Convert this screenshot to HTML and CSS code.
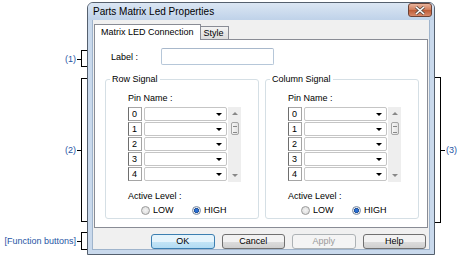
FILE: index.html
```html
<!DOCTYPE html>
<html lang="en">
<head>
	<meta charset="UTF-8">
	<title>Parts Matrix Led Properties</title>
	<link rel="stylesheet" href="styles.css">
</head>
<body>
	<section class="canvas">
		<div class="dialog">
			<div class="titlebar">
				<span class="title">Parts Matrix Led Properties</span>
				<span class="close">
					<svg width="12" height="9" viewBox="0 0 12 9"><path d="M2 1 L10 8 M10 1 L2 8" stroke="#5a4a44" stroke-width="3"/><path d="M2 1 L10 8 M10 1 L2 8" stroke="#fff" stroke-width="1.6"/></svg>
				</span>
			</div>
			<div class="client">
				<div class="tabs">
					<span class="tab active">Matrix LED Connection</span>
					<span class="tab">Style</span>
				</div>
				<div class="page">
					<div class="label-row">
						<span class="label-text">Label :</span>
						<span class="textbox"></span>
					</div>
					<div class="groups">
						<fieldset class="group">
							<legend>Row Signal</legend>
							<div class="caption">Pin Name :</div>
							<div class="pins">
								<ul class="rows">
									<li><span class="idx">0</span><span class="combo"><i class="arrow"></i></span></li>
									<li><span class="idx">1</span><span class="combo"><i class="arrow"></i></span></li>
									<li><span class="idx">2</span><span class="combo"><i class="arrow"></i></span></li>
									<li><span class="idx">3</span><span class="combo"><i class="arrow"></i></span></li>
									<li><span class="idx">4</span><span class="combo"><i class="arrow"></i></span></li>
								</ul>
								<div class="scroll"><i class="up"></i><i class="thumb"></i><i class="down"></i></div>
							</div>
							<div class="caption level">Active Level :</div>
							<div class="radios">
								<label class="radio"><i class="dot"></i>LOW</label>
								<label class="radio on"><i class="dot"></i>HIGH</label>
							</div>
						</fieldset>
						<fieldset class="group">
							<legend>Column Signal</legend>
							<div class="caption">Pin Name :</div>
							<div class="pins">
								<ul class="rows">
									<li><span class="idx">0</span><span class="combo"><i class="arrow"></i></span></li>
									<li><span class="idx">1</span><span class="combo"><i class="arrow"></i></span></li>
									<li><span class="idx">2</span><span class="combo"><i class="arrow"></i></span></li>
									<li><span class="idx">3</span><span class="combo"><i class="arrow"></i></span></li>
									<li><span class="idx">4</span><span class="combo"><i class="arrow"></i></span></li>
								</ul>
								<div class="scroll"><i class="up"></i><i class="thumb"></i><i class="down"></i></div>
							</div>
							<div class="caption level">Active Level :</div>
							<div class="radios">
								<label class="radio"><i class="dot"></i>LOW</label>
								<label class="radio on"><i class="dot"></i>HIGH</label>
							</div>
						</fieldset>
					</div>
				</div>
				<div class="buttons">
					<span class="btn default">OK</span>
					<span class="btn">Cancel</span>
					<span class="btn disabled">Apply</span>
					<span class="btn">Help</span>
				</div>
			</div>
		</div>

		<div class="note n1"><span>(1)</span></div>
		<div class="note n2"><span>(2)</span></div>
		<div class="note n3"><span>(3)</span></div>
		<div class="note n4"><span>[Function buttons]</span></div>
	</section>
</body>
</html>
```

FILE: styles.css
```css
*{margin: 0; padding: 0; box-sizing: border-box;}
li{list-style: none;}
body{background: #fff; font-family: "Liberation Sans", Arial, sans-serif; font-size: 9px; color: #000;}
.canvas{width: 474px; height: 259px; position: relative; overflow: hidden; padding: 2px 0 0 87px;}

/* window */
.dialog{width: 348px; height: 253px; border: 1px solid #55606e; border-radius: 6px 6px 0 0; background: #c9d9ec; padding: 0 4px 4px 4px; display: flex; flex-direction: column;}
.titlebar{height: 19px; display: flex; align-items: center; justify-content: space-between; margin: 0 -4px; padding: 0 2px 0 5px; background: linear-gradient(#dbe6f3, #bfd2e9); border-radius: 5px 5px 0 0;}
.title{font-size: 10px; color: #000;}
.close{width: 24px; height: 14px; margin-top: -3px; border: 1px solid #6b4236; border-radius: 3px; background: linear-gradient(#e9b49c, #cf7a57 50%, #bd5a35 51%, #d8896a); display: flex; align-items: center; justify-content: center;}
.client{flex: 1; background: #f0f0f0; padding: 3px 3px 0 1px; border: 1px solid #9fb4cc; border-top: none;}

/* tabs */
.tabs{display: flex; align-items: flex-end; height: 16px; position: relative; z-index: 1;}
.tab{height: 13px; padding: 0 4px 0 3px; border: 1px solid #898c95; border-bottom: none; background: linear-gradient(#f3f3f3, #dcdcdc); line-height: 12px; margin-left: -1px;}
.tab.active{height: 16px; margin-left: 0; padding: 0 6px 0 6px; background: #fff; line-height: 15px; margin-bottom: -1px;}
.page{height: 189px; background: #fff; border: 1px solid #898c95; padding: 8px 8px 0 10px; width: 334px;}

.label-row{display: flex; align-items: center; height: 17px; padding-left: 6px;}
.label-text{width: 50px;}
.textbox{width: 113px; height: 17px; border: 1px solid #b6c7d9; border-top-color: #a8b8cb; border-radius: 2px; background: #fff;}

.groups{display: flex; gap: 6px; margin-top: 9px;}
.group{width: 154px; border: 1px solid #d5dfe5; border-radius: 3px; padding: 9px 0 3px 22px;}
.group legend{margin-left: -18px; padding: 0 2px; line-height: 10px; font-size: 9px;}
.caption{line-height: 10px;}
.level{margin-top: 9px;}

.pins{display: flex; margin-top: 4px;}
.rows li{display: flex; gap: 2px; height: 15px;}
.idx{width: 14px; height: 14px; border: 1px solid #a5a5a5; border-left-color: #6e6e6e; line-height: 12px; padding-left: 3px; background: #fff;}
.combo{width: 83px; height: 14px; border: 1px solid #c5c5c5; border-radius: 2px; background: #fff; position: relative;}
.arrow{position: absolute; right: 4px; top: 5px; border: 3px solid transparent; border-top: 3px solid #000; border-bottom: none;}
.scroll{width: 13px; height: 75px; margin-left: 1px; background: #eeeeee; display: flex; flex-direction: column; align-items: center;}
.scroll .up{margin-top: 5px; border: 3px solid transparent; border-bottom: 3px solid #888; border-top: none;}
.scroll .thumb{width: 8px; height: 13px; margin-top: 7px; border: 1px solid #a5a5a5; border-radius: 2px; background: linear-gradient(90deg, #f6f6f6, #e2e2e2); position: relative;}
.scroll .thumb::after{content: ""; position: absolute; left: 1px; right: 1px; top: 3px; height: 5px; border-top: 1px solid #888; border-bottom: 1px solid #888;}
.scroll .down{margin-top: auto; margin-bottom: 5px; border: 3px solid transparent; border-top: 3px solid #888; border-bottom: none;}

.radios{display: flex; margin-top: 4px; padding-left: 13px; line-height: 10px;}
.radio{display: flex; align-items: center; gap: 3px; width: 51px;}
.dot{width: 9px; height: 9px; border: 1px solid #9a9a9a; border-radius: 50%; background: radial-gradient(#f4f4f4, #d8d8d8);}
.radio.on .dot{background: radial-gradient(#2b6fd2 30%, #1b4f9a 45%, #e8e8e8 55%); border-color: #7a8aa2;}

/* buttons */
.buttons{display: flex; gap: 7px; margin-top: 6px; padding-left: 57px;}
.btn{width: 65px; height: 15px; border: 1px solid #707070; border-radius: 3px; background: linear-gradient(#f2f2f2 50%, #dddddd 51%, #cfcfcf); text-align: center; line-height: 13px;}
.btn.default{border-color: #3c7fb1; background: linear-gradient(#e5f4fc 50%, #c4e5f6 51%, #b2dbf3);}
.btn.disabled{border-color: #adb2b5; background: #f4f4f4; color: #9a9a9a;}

/* annotation callouts */
.note{position: absolute; width: 6px; border: 1px solid #000; border-right: none;}
.note::before{content: ""; position: absolute; top: 50%; right: 100%; width: 5px; border-top: 1px solid #000;}
.note span{position: absolute; top: 50%; right: 11px; transform: translateY(-50%); white-space: nowrap; color: #1f55a5; font-size: 9px;}
.n1{left: 81px; top: 50px; height: 17px;}
.n2{left: 81px; top: 78px; height: 144px;}
.n4{left: 81px; top: 232px; height: 18px;}
.n3{left: 435px; top: 77px; height: 146px; border-left: none; border-right: 1px solid #000;}
.n3::before{right: auto; left: 100%;}
.n3 span{right: auto; left: 11px;}
```
